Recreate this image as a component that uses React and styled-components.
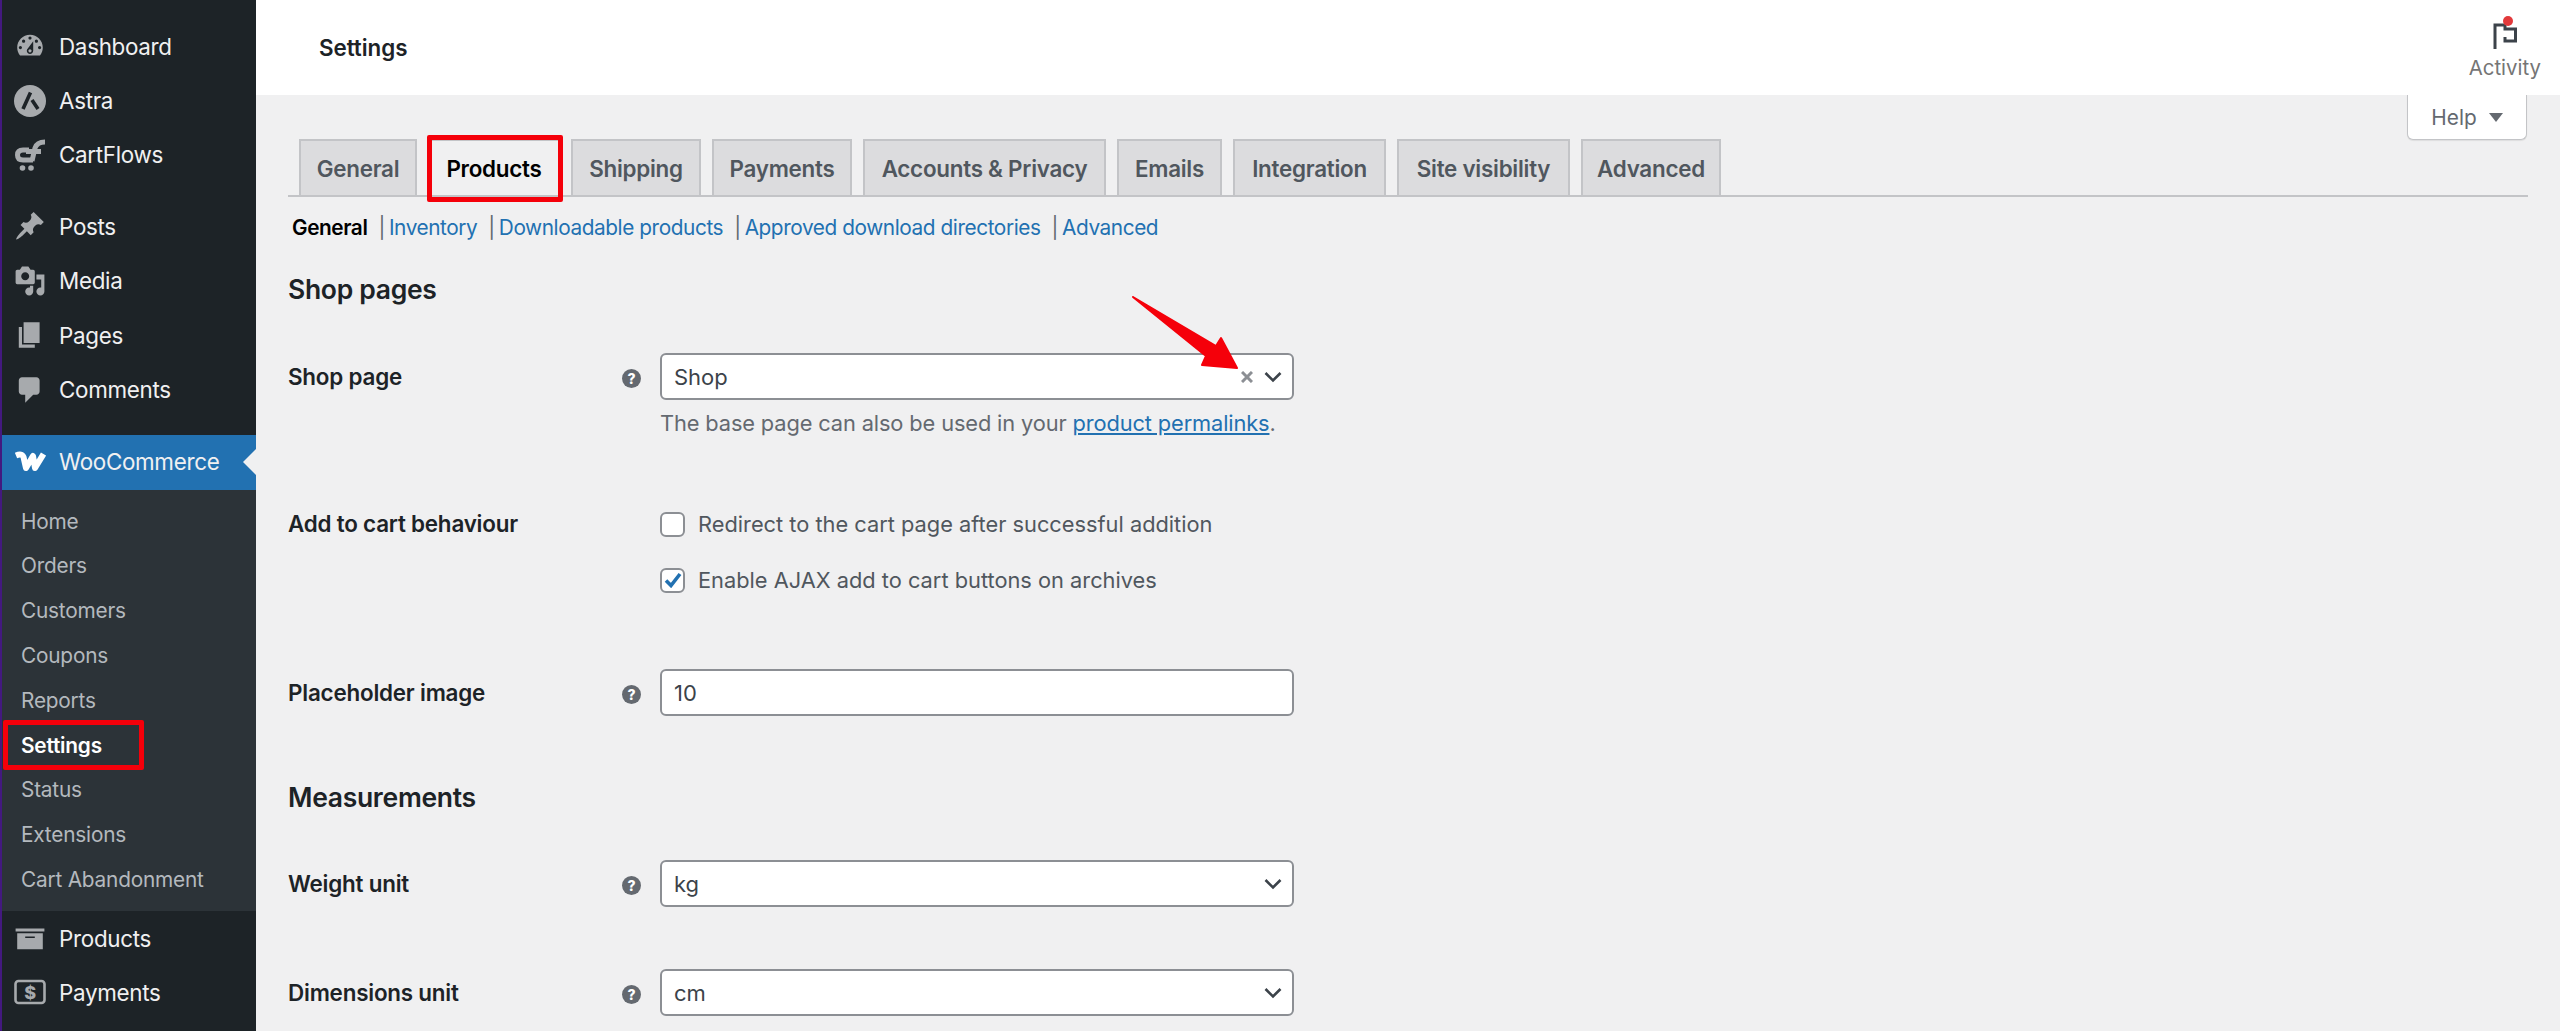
import React from 'react';
import styled, { createGlobalStyle } from 'styled-components';

const Global = createGlobalStyle`
  html, body { margin: 0; padding: 0; height: 100%; background: #f0f0f1; }
  body { font-family: Inter, "Noto Sans", "Liberation Sans", sans-serif; overflow: hidden; }
  *, *::before, *::after { box-sizing: border-box; }
`;

const Page = styled.div`
  display: flex;
  width: 2560px;
  height: 1031px;
  overflow: hidden;
`;

const Sidebar = styled.nav`
  width: 256px;
  flex: none;
  background: #1d2327;
  border-left: 2px solid #43197f;
  padding-top: 19px;
`;

const MenuGroup = styled.div`
  margin-bottom: ${p => p.$after || 0}px;
`;

const MenuItem = styled.div`
  position: relative;
  display: flex;
  align-items: center;
  height: ${p => (p.$current ? 55 : 54.4)}px;
  padding-left: 12px;
  padding-bottom: ${p => (p.$current ? 2 : 0)}px;
  gap: 13px;
  font-size: 22.4px;
  letter-spacing: -0.3px;
  color: #f0f0f1;
  background: ${p => (p.$current ? '#2271b1' : 'transparent')};
  ${p => p.$current && `
    &::after {
      content: '';
      position: absolute;
      right: 0;
      top: 50%;
      margin-top: -13px;
      border: 13px solid transparent;
      border-right-color: #f0f0f1;
      border-left-width: 0;
    }
  `}
`;

const IconBox = styled.svg`
  width: 32px;
  height: 32px;
  flex: none;
  fill: ${p => p.$color || '#a7aaad'};
`;

const SubMenu = styled.div`
  background: #2c3338;
  padding: 9px 0 9px;
`;

const SubItem = styled.div`
  position: relative;
  display: flex;
  align-items: center;
  height: 44.8px;
  padding-left: 19px;
  font-size: 20.8px;
  letter-spacing: -0.2px;
  font-weight: ${p => (p.$current ? 600 : 400)};
  color: ${p => (p.$current ? '#fff' : '#b4b9be')};
  ${p => p.$marked && `
    &::after {
      content: '';
      position: absolute;
      left: 1px;
      top: -3px;
      bottom: -2px;
      width: 141px;
      border: 5px solid #f5000a;
      border-radius: 2px;
    }
  `}
`;

const Content = styled.div`
  flex: 1;
  min-width: 0;
  position: relative;
`;

const TopBar = styled.header`
  height: 95px;
  background: #fff;
  display: flex;
  align-items: center;
  justify-content: space-between;
  padding: 0 19px 0 63px;
`;

const PageTitle = styled.h1`
  margin: 0;
  font-size: 22.4px;
  font-weight: 600;
  letter-spacing: -0.05px;
  color: #1d2327;
`;

const Activity = styled.div`
  display: flex;
  flex-direction: column;
  align-items: center;
  gap: 6px;
  font-size: 20.4px;
  color: #757575;
  padding-top: 8px;
`;

const HelpTab = styled.div`
  position: absolute;
  top: 95px;
  right: 33px;
  width: 120px;
  height: 45px;
  background: #fff;
  border: 1px solid #c3c4c7;
  border-top: 0;
  border-radius: 0 0 6px 6px;
  box-shadow: 0 1px 1px rgba(0,0,0,.08);
  display: flex;
  align-items: center;
  justify-content: center;
  gap: 12px;
  font-size: 20.8px;
  color: #646970;
`;

const HelpCaret = styled.span`
  width: 0;
  height: 0;
  border-left: 7px solid transparent;
  border-right: 7px solid transparent;
  border-top: 9px solid #646970;
`;

const Main = styled.main`
  padding: 46px 32px 0;
`;

const TabBar = styled.div`
  display: flex;
  align-items: flex-end;
  gap: 11px;
  height: 56px;
  padding-left: 11px;
  border-bottom: 2px solid #c3c4c7;
`;

const Tab = styled.div`
  position: relative;
  height: 56px;
  width: ${p => p.$w}px;
  flex: none;
  display: flex;
  align-items: center;
  justify-content: center;
  white-space: nowrap;
  font-size: 22.4px;
  font-weight: 600;
  letter-spacing: -0.25px;
  color: ${p => (p.$active ? '#000' : '#50575e')};
  background: ${p => (p.$active ? '#f0f0f1' : '#dcdcde')};
  border: 2px solid #c3c4c7;
  border-bottom: 0;
  ${p => p.$marked && `
    &::after {
      content: '';
      position: absolute;
      inset: -6px -5px -7px -3px;
      border: 5px solid #f5000a;
      border-radius: 2px;
    }
  `}
`;

const SubNav = styled.div`
  display: flex;
  align-items: center;
  height: 32px;
  margin-top: 14px;
  padding-left: 4px;
  font-size: 20.8px;
  letter-spacing: -0.42px;
`;

const SubNavLink = styled.span`
  white-space: nowrap;
  color: ${p => (p.$active ? '#000' : '#2271b1')};
  font-weight: ${p => (p.$active ? 600 : 400)};
`;

const Pipe = styled.span`
  color: #646970;
  margin: 0 4px 0 11px;
`;

const Heading = styled.h2`
  margin: ${p => p.$top}px 0 0;
  height: 34px;
  line-height: 34px;
  font-size: 26.5px;
  font-weight: 600;
  letter-spacing: -0.3px;
  color: #1d2327;
`;

const Row = styled.div`
  display: flex;
  align-items: ${p => (p.$top ? 'flex-start' : 'center')};
  margin-top: ${p => p.$mt}px;
`;

const LabelCell = styled.div`
  width: 372px;
  flex: none;
  display: flex;
  align-items: center;
  justify-content: space-between;
  padding-right: 19px;
  height: ${p => (p.$h ? `${p.$h}px` : 'auto')};
`;

const Label = styled.label`
  font-size: 22.4px;
  font-weight: 600;
  letter-spacing: -0.2px;
  color: #1d2327;
`;

const HelpIcon = styled.span`
  width: 19px;
  height: 19px;
  border-radius: 50%;
  background: #646970;
  color: #fff;
  font-size: 14px;
  font-weight: 800;
  line-height: 19px;
  text-align: center;
  margin-top: 3px;
`;

const Field = styled.div`
  position: relative;
  width: 634px;
  height: 47px;
  background: #fff;
  border: 2px solid #8c8f94;
  border-radius: 6px;
  display: flex;
  align-items: center;
  padding: 0 12px;
  font-size: 22px;
  color: #3c434a;
`;

const FieldValue = styled.span`
  flex: 1;
`;

const ClearMark = styled.svg`
  width: 12px;
  height: 12px;
  stroke: #8c8f94;
  stroke-width: 3;
  margin-right: 11px;
`;

const Chevron = styled.svg`
  width: 18px;
  height: 12px;
  fill: none;
  stroke: #3c434a;
  stroke-width: 2.6;
  margin-right: -2px;
`;

const Arrow = styled.svg`
  position: absolute;
  top: -65px;
  left: 468px;
  width: 120px;
  height: 90px;
  fill: #f5000a;
  stroke: #f5000a;
  stroke-width: 2;
  stroke-linejoin: round;
`;

const Description = styled.p`
  margin: 8px 0 0 372px;
  height: 30px;
  line-height: 30px;
  font-size: 21.8px;
  letter-spacing: -0.12px;
  color: #646970;
`;

const DescLink = styled.span`
  color: #2271b1;
  text-decoration: underline;
`;

const CheckList = styled.div`
  display: flex;
  flex-direction: column;
  gap: 20px;
`;

const CheckRow = styled.div`
  display: flex;
  align-items: center;
  height: 36px;
  gap: 13px;
  font-size: 21.8px;
  color: #50575e;
`;

const CheckBox = styled.span`
  width: 25px;
  height: 25px;
  background: #fff;
  border: 2px solid #8c8f94;
  border-radius: 6px;
  display: flex;
  align-items: center;
  justify-content: center;
`;

const CheckMark = styled.svg`
  width: 18px;
  height: 16px;
  fill: none;
  stroke: #2271b1;
  stroke-width: 3.6;
`;

const FlagIcon = styled.span`
  position: relative;
  display: block;
  width: 26px;
  height: 26px;
`;

const Flag = styled.svg`
  width: 26px;
  height: 26px;
  fill: none;
  stroke: #3c434a;
  stroke-width: 3;
`;

const Dot = styled.span`
  position: absolute;
  top: -7px;
  left: 11px;
  width: 10px;
  height: 10px;
  border-radius: 50%;
  background: #e2393b;
`;

const Dash = ({ d }) => <IconBox viewBox="0 0 20 20"><path d={d} /></IconBox>;

const icons = {
  dashboard: <Dash d="M3.76 16h12.48c1.1-1.37 1.76-3.11 1.76-5 0-4.42-3.58-8-8-8s-8 3.58-8 8c0 1.89.66 3.63 1.76 5zM10 4c.55 0 1 .45 1 1s-.45 1-1 1-1-.45-1-1 .45-1 1-1zM6 6c.55 0 1 .45 1 1s-.45 1-1 1-1-.45-1-1 .45-1 1-1zm8 0c.55 0 1 .45 1 1s-.45 1-1 1-1-.45-1-1 .45-1 1-1zm-5.37 5.55L12 7v6c0 1.1-.9 2-2 2s-2-.9-2-2c0-.57.24-1.08.63-1.45zM4 10c.55 0 1 .45 1 1s-.45 1-1 1-1-.45-1-1 .45-1 1-1zm12 0c.55 0 1 .45 1 1s-.45 1-1 1-1-.45-1-1 .45-1 1-1zm-5 3c0-.55-.45-1-1-1s-1 .45-1 1 .45 1 1 1 1-.45 1-1z" />,
  astra: (
    <IconBox viewBox="0 0 32 32">
      <circle cx="16" cy="16" r="16" />
      <path d="M9 24 L16.5 7.5 M18 15 L24 24" fill="none" stroke="#1d2327" strokeWidth="3.6" />
    </IconBox>
  ),
  cartflows: (
    <IconBox viewBox="0 0 32 32">
      <g fill="none" stroke="#a7aaad" strokeWidth="5">
        <path d="M15 11 H9 Q3.5 11 3.5 16 Q3.5 21 9 21 H19" />
        <path d="M31 3 Q23 3 21 9 L18 22" />
        <path d="M12 12.5 H27" />
      </g>
      <circle cx="8.5" cy="29" r="2.8" />
      <circle cx="17" cy="29" r="2.8" />
    </IconBox>
  ),
  posts: <Dash d="M10.44 3.02l1.82-1.82 6.36 6.35-1.83 1.82c-1.05-.68-2.48-.57-3.41.36l-.75.75c-.92.93-1.04 2.35-.35 3.41l-1.83 1.82-2.41-2.41-2.8 2.79c-.42.42-3.38 2.71-3.8 2.29s1.86-3.39 2.28-3.81l2.79-2.79L4.1 9.36l1.83-1.82c1.05.69 2.48.57 3.4-.36l.75-.75c.93-.92 1.05-2.35.36-3.41z" />,
  media: <Dash d="M13 11V4c0-.55-.45-1-1-1h-1.67L9 1H5L3.67 3H2c-.55 0-1 .45-1 1v7c0 .55.45 1 1 1h10c.55 0 1-.45 1-1zM7 4.5c1.38 0 2.5 1.12 2.5 2.5S8.38 9.5 7 9.5 4.5 8.38 4.5 7 5.62 4.5 7 4.5zM14 6h5v10.5c0 1.38-1.12 2.5-2.5 2.5S14 17.88 14 16.5s1.12-2.5 2.5-2.5c.17 0 .34.02.5.05V9h-3V6zm-4 8.05V13h2v3.5c0 1.38-1.12 2.5-2.5 2.5S7 17.88 7 16.5 8.12 14 9.5 14c.17 0 .34.02.5.05z" />,
  pages: <Dash d="M6 15V2h10v13H6zm-1 1h8v2H3V5h2v11z" />,
  comments: <Dash d="M5 2h9c1.1 0 2 .9 2 2v7c0 1.1-.9 2-2 2h-2l-5 5v-5H5c-1.1 0-2-.9-2-2V4c0-1.1.9-2 2-2z" />,
  woo: (
    <IconBox viewBox="0 0 32 32">
      <path d="M2 10.5 Q8 8 9.5 12 L12 23 L19 11 L21 23 L29.5 9" fill="none" stroke="#fff" strokeWidth="6" strokeLinejoin="round" />
    </IconBox>
  ),
  products: <Dash d="M19 4v2H1V4h18zM2 7h16v10H2V7zm11 3V9H7v1h6z" />,
  payments: (
    <IconBox viewBox="0 0 32 32">
      <rect x="1.5" y="5" width="29" height="22" rx="3" fill="none" stroke="#a7aaad" strokeWidth="2.6" />
      <text x="16" y="22.5" textAnchor="middle" fontSize="18" fontWeight="800" fill="#a7aaad" fontFamily="Inter, sans-serif">$</text>
    </IconBox>
  ),
};

const topMenu = [
  [['dashboard', 'Dashboard'], ['astra', 'Astra'], ['cartflows', 'CartFlows']],
  [['posts', 'Posts'], ['media', 'Media'], ['pages', 'Pages'], ['comments', 'Comments']],
];

const subMenu = ['Home', 'Orders', 'Customers', 'Coupons', 'Reports', 'Settings', 'Status', 'Extensions', 'Cart Abandonment'];

const tabs = [
  ['General', 118], ['Products', 132], ['Shipping', 130], ['Payments', 140], ['Accounts & Privacy', 243],
  ['Emails', 105], ['Integration', 153], ['Site visibility', 173], ['Advanced', 140],
];

const SelectField = ({ value, clear, children }) => (
  <Field>
    <FieldValue>{value}</FieldValue>
    {clear && (
      <ClearMark viewBox="0 0 12 12"><path d="M1 1 L11 11 M11 1 L1 11" /></ClearMark>
    )}
    <Chevron viewBox="0 0 18 12"><path d="M1.5 2 L9 9.5 L16.5 2" /></Chevron>
    {children}
  </Field>
);

export default function App() {
  return (
    <Page>
      <Global />
      <Sidebar>
        <MenuGroup $after={17}>
          {topMenu[0].map(([k, t]) => <MenuItem key={k}>{icons[k]}{t}</MenuItem>)}
        </MenuGroup>
        <MenuGroup $after={18}>
          {topMenu[1].map(([k, t]) => <MenuItem key={k}>{icons[k]}{t}</MenuItem>)}
        </MenuGroup>
        <MenuItem $current>{icons.woo}WooCommerce</MenuItem>
        <SubMenu>
          {subMenu.map(t => (
            <SubItem key={t} $current={t === 'Settings'} $marked={t === 'Settings'}>{t}</SubItem>
          ))}
        </SubMenu>
        <MenuItem>{icons.products}Products</MenuItem>
        <MenuItem>{icons.payments}Payments</MenuItem>
      </Sidebar>
      <Content>
        <TopBar>
          <PageTitle>Settings</PageTitle>
          <Activity>
            <FlagIcon>
              <Flag viewBox="0 0 26 26"><path d="M3 26 V2 H13 V6 H23.5 V18 H13 V14" /></Flag>
              <Dot />
            </FlagIcon>
            Activity
          </Activity>
        </TopBar>
        <HelpTab>Help<HelpCaret /></HelpTab>
        <Main>
          <TabBar>
            {tabs.map(([t, w]) => (
              <Tab key={t} $w={w} $active={t === 'Products'} $marked={t === 'Products'}>{t}</Tab>
            ))}
          </TabBar>
          <SubNav>
            <SubNavLink $active>General</SubNavLink><Pipe>|</Pipe>
            <SubNavLink>Inventory</SubNavLink><Pipe>|</Pipe>
            <SubNavLink>Downloadable products</SubNavLink><Pipe>|</Pipe>
            <SubNavLink>Approved download directories</SubNavLink><Pipe>|</Pipe>
            <SubNavLink>Advanced</SubNavLink>
          </SubNav>
          <Heading $top={29}>Shop pages</Heading>
          <Row $mt={47}>
            <LabelCell><Label>Shop page</Label><HelpIcon>?</HelpIcon></LabelCell>
            <SelectField value="Shop" clear>
              <Arrow viewBox="0 0 120 90"><polygon points="3,7 86,56 91,48 107,78 72,75 76,66" /></Arrow>
            </SelectField>
          </Row>
          <Description>The base page can also be used in your <DescLink>product permalinks</DescLink>.</Description>
          <Row $mt={68} $top>
            <LabelCell $h={34}><Label>Add to cart behaviour</Label></LabelCell>
            <CheckList>
              <CheckRow><CheckBox />Redirect to the cart page after successful addition</CheckRow>
              <CheckRow>
                <CheckBox>
                  <CheckMark viewBox="0 0 18 16"><path d="M2 8.5 L7 13.5 L16 2" /></CheckMark>
                </CheckBox>
                Enable AJAX add to cart buttons on archives
              </CheckRow>
            </CheckList>
          </Row>
          <Row $mt={71}>
            <LabelCell><Label>Placeholder image</Label><HelpIcon>?</HelpIcon></LabelCell>
            <Field>10</Field>
          </Row>
          <Heading $top={64}>Measurements</Heading>
          <Row $mt={46}>
            <LabelCell><Label>Weight unit</Label><HelpIcon>?</HelpIcon></LabelCell>
            <SelectField value="kg" />
          </Row>
          <Row $mt={62}>
            <LabelCell><Label>Dimensions unit</Label><HelpIcon>?</HelpIcon></LabelCell>
            <SelectField value="cm" />
          </Row>
        </Main>
      </Content>
    </Page>
  );
}
